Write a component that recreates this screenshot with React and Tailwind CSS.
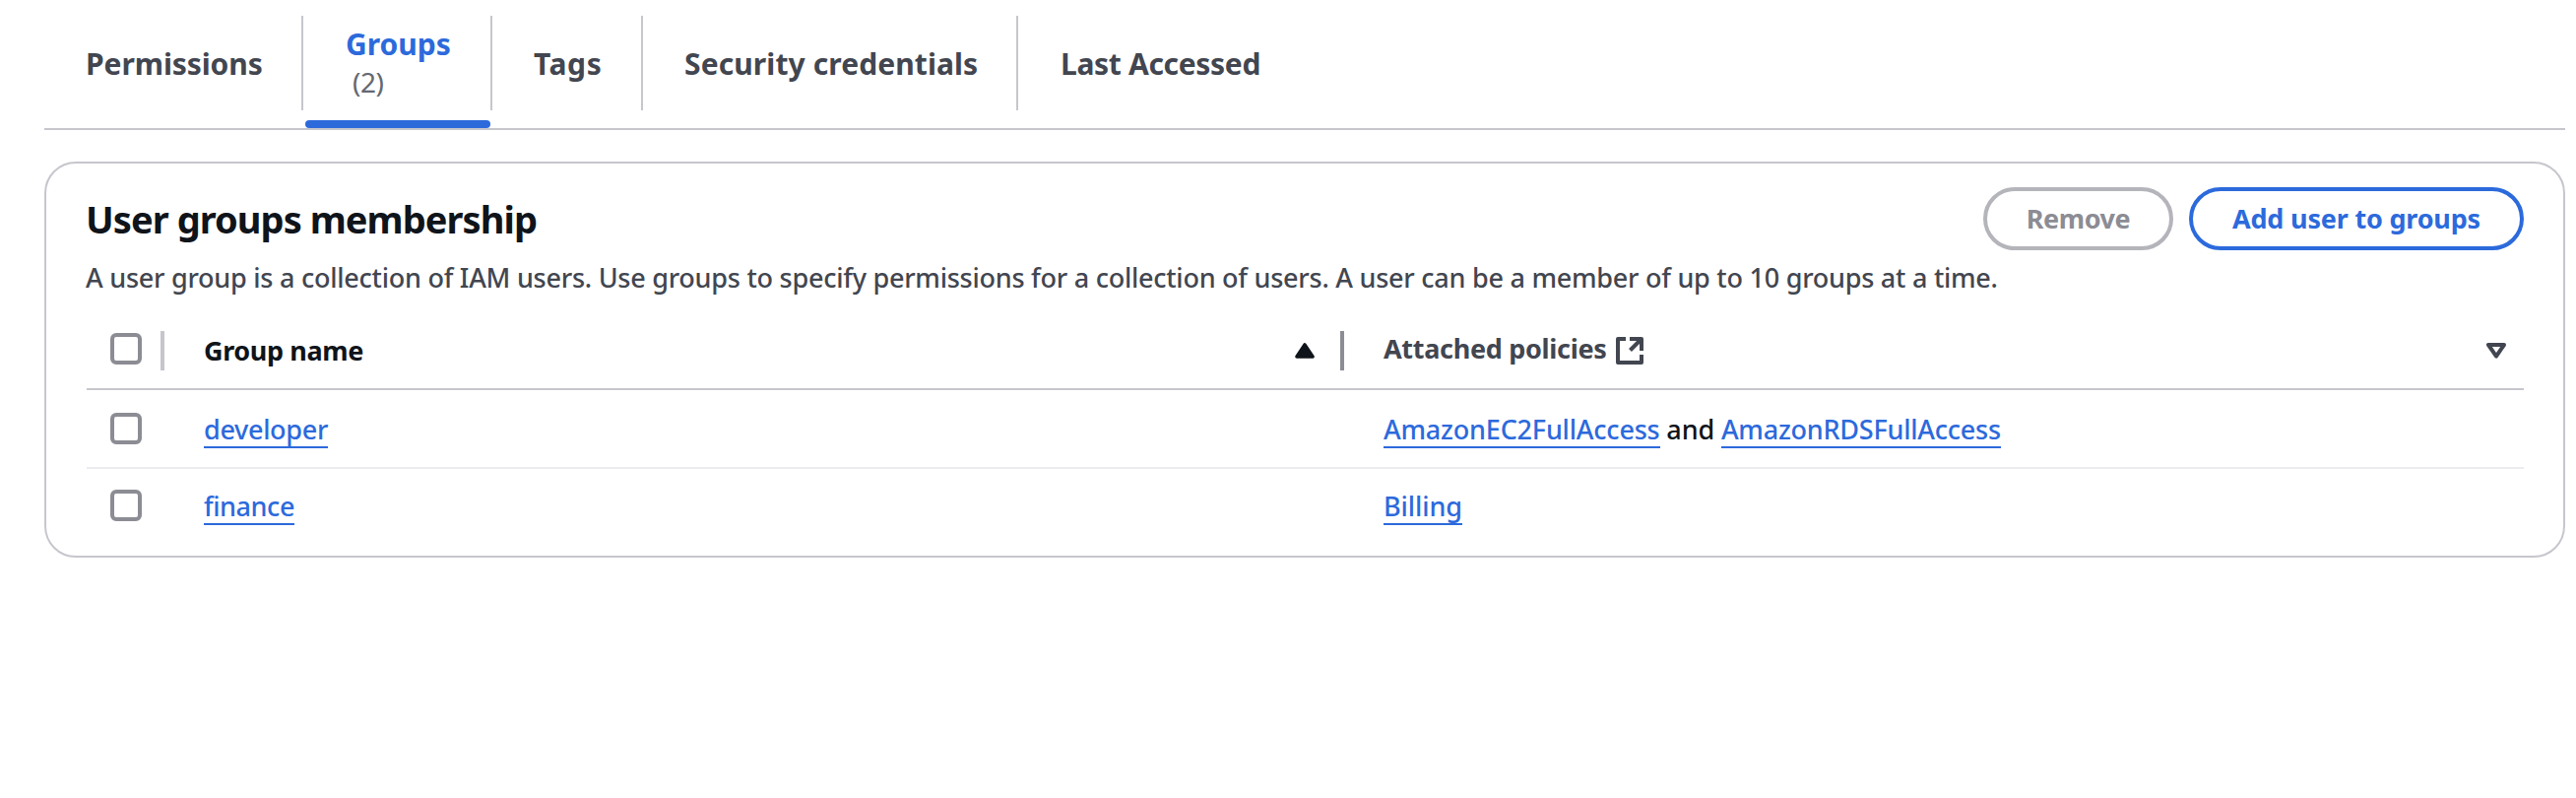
import React from "react";

function Separator() {
  return <span className="mt-4 h-24 w-[2px] shrink-0 bg-[#c6c6cd]" />;
}

function Tab({ className, children }) {
  return (
    <button
      type="button"
      className={`shrink-0 pt-[45px] pb-[45px] text-left text-[30px] leading-[40px] font-bold whitespace-nowrap text-[#424650] ${className}`}
    >
      {children}
    </button>
  );
}

function Tabs() {
  return (
    <nav className="flex h-[132px] border-b-2 border-[#c6c6cd]">
      <Tab className="w-[261px] pl-[42px] tracking-[-0.08px]">Permissions</Tab>
      <Separator />
      <button
        type="button"
        className="flex w-[190px] shrink-0 flex-col items-start pt-[25px] pl-[2px] text-left whitespace-nowrap"
      >
        <span className="pl-[41px] text-[30px] leading-[40px] font-bold text-[#2c6adc]">Groups</span>
        <span className="-mt-0.5 pl-12 text-[28px] leading-[40px] font-normal tracking-[-0.5px] text-[#656871]">
          (2)
        </span>
        <span className="mt-auto h-2 w-[188px] rounded-[4px] bg-[#2c6adc]" />
      </button>
      <Separator />
      <Tab className="w-[151px] pl-[42px] tracking-[0.6px]">Tags</Tab>
      <Separator />
      <Tab className="w-[379px] pl-[42px] tracking-[0.1px]">Security credentials</Tab>
      <Separator />
      <Tab className="w-[290px] pl-[43px] tracking-[-0.32px]">Last Accessed</Tab>
    </nav>
  );
}

function Checkbox() {
  return (
    <span
      role="checkbox"
      aria-checked="false"
      className="block size-8 shrink-0 rounded-[6px] border-4 border-[#8c8c94] bg-white"
    />
  );
}

function Link({ className, children }) {
  return (
    <a className={`inline-block border-b-2 border-[#2c6adc] pt-px leading-[35px] text-[#2c6adc] ${className}`}>
      {children}
    </a>
  );
}

function ExternalIcon() {
  return (
    <svg className="size-7" viewBox="0 0 28 28" fill="none" stroke="#424650" strokeWidth="4" strokeLinejoin="round">
      <path d="M10 2H2v24h24v-8" />
      <path d="M14 2h12v12" />
      <path d="M26 2 14.5 13.5" />
    </svg>
  );
}

function SortAscending() {
  return (
    <svg className="h-4 w-5" viewBox="0 0 20 16">
      <path d="M10 2 18 14H2Z" fill="#0f141a" stroke="#0f141a" strokeWidth="3.6" strokeLinejoin="round" />
    </svg>
  );
}

function SortIdle() {
  return (
    <svg className="h-4 w-5" viewBox="0 0 20 16">
      <path d="M2 2h16L10 13.6Z" fill="none" stroke="#424650" strokeWidth="4" strokeLinejoin="round" />
    </svg>
  );
}

export default function App() {
  return (
    <main className="min-h-[810px] w-[2616px] overflow-hidden bg-white pr-[11px] pl-[45px] font-['Noto_Sans',sans-serif] text-[27px] font-medium text-[#0f141a]">
      <Tabs />
      <section className="mt-8 flex h-[402px] flex-col rounded-[32px] border-2 border-[#c6c6cd] pt-6 pr-10 pl-[41px]">
        <header className="flex h-16 items-center gap-4">
          <h2 className="mr-auto -ml-px text-[38px] leading-[64px] font-bold tracking-[-0.94px]">
            User groups membership
          </h2>
          <button
            type="button"
            disabled
            className="h-16 w-[193px] rounded-full border-4 border-[#b4b4bb] leading-[54px] font-bold tracking-[-0.42px] text-[#8c8c94]"
          >
            Remove
          </button>
          <button
            type="button"
            className="h-16 w-[340px] rounded-full border-4 border-[#2c6adc] leading-[54px] font-bold tracking-[-0.19px] text-[#2c6adc]"
          >
            Add user to groups
          </button>
        </header>
        <p className="mt-2 -ml-px leading-[40px] tracking-[-0.246px] whitespace-nowrap text-[#424650]">
          A user group is a collection of IAM users. Use groups to specify permissions for a collection of users. A user
          can be a member of up to 10 groups at a time.
        </p>

        <div className="mt-3.5 grid grid-cols-[119px_1198px_1fr]">
          <div className="col-span-3 grid h-20 grid-cols-subgrid border-b-2 border-[#c6c6cd] leading-[40px] font-bold">
            <div className="flex pl-6">
              <div className="pt-[22px]">
                <Checkbox />
              </div>
              <span className="mt-5 ml-[19px] h-10 w-1 bg-[#c6c6cd]" />
            </div>
            <div className="flex pt-5 pr-10">
              <span className="mr-auto tracking-[-0.38px]">Group name</span>
              <span className="mt-3 mr-[26px]">
                <SortAscending />
              </span>
              <span className="h-10 w-1 bg-[#8c8c94]" />
            </div>
            <div className="flex pt-[18px] pr-[18px] text-[#424650]">
              <span className="tracking-[-0.31px]">Attached policies</span>
              <span className="mt-2 mr-auto ml-[9.5px]">
                <ExternalIcon />
              </span>
              <span className="mt-3.5">
                <SortIdle />
              </span>
            </div>
          </div>

          <div className="col-span-3 grid h-20 grid-cols-subgrid border-b-2 border-[#ebebf0]">
            <div className="pt-[23px] pl-6">
              <Checkbox />
            </div>
            <div className="flex items-start pt-[21px]">
              <Link className="tracking-[-0.32px]">developer</Link>
            </div>
            <div className="flex items-start gap-[6.8px] pt-[21px] leading-[35px]">
              <Link className="tracking-[-0.2px]">AmazonEC2FullAccess</Link>
              <span className="pt-px tracking-[-0.13px]">and</span>
              <Link className="tracking-[-0.23px]">AmazonRDSFullAccess</Link>
            </div>
          </div>

          <div className="col-span-3 grid h-[86px] grid-cols-subgrid">
            <div className="pt-[21px] pl-6">
              <Checkbox />
            </div>
            <div className="flex items-start pt-[19px]">
              <Link className="tracking-[-0.43px]">finance</Link>
            </div>
            <div className="flex items-start pt-[19px]">
              <Link className="tracking-[-0.07px]">Billing</Link>
            </div>
          </div>
        </div>
      </section>
    </main>
  );
}
